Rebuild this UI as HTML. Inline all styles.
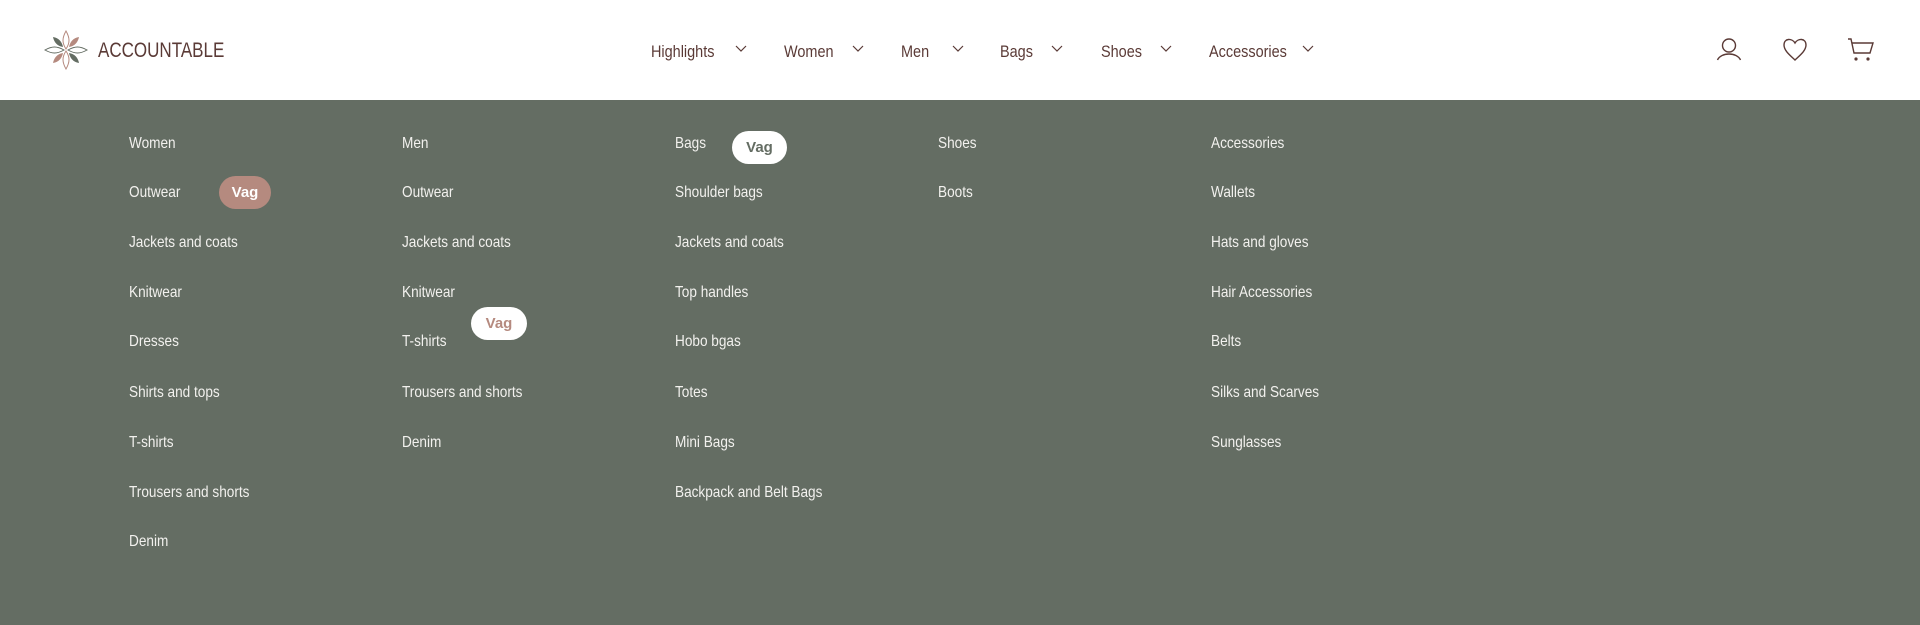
<!DOCTYPE html>
<html><head><meta charset="utf-8"><style>
*{margin:0;padding:0;box-sizing:border-box}
body{width:1920px;height:625px;overflow:hidden;background:#646d63;font-family:"Liberation Sans Narrow","Liberation Sans",sans-serif;position:relative}
.hdr{position:absolute;left:0;top:0;width:1920px;height:100px;background:#fff}
.a{position:absolute;white-space:nowrap}
.nav{color:#5a3a36;font-size:17px;top:42px;transform:scaleX(0.85);transform-origin:0 0}
.chev{position:absolute;top:45px}
.m{color:#f2f1ee;font-size:16px;transform:scaleX(0.85);transform-origin:0 0;margin-top:2px}
.pill{position:absolute;border-radius:17px;font-weight:bold;font-size:15px;text-align:center;line-height:33px}
</style></head><body>
<div class="hdr">
<svg class="a" style="left:43px;top:29px" width="46" height="42" viewBox="0 0 46 42">
<path d="M23 2 C19 9 19 14 23 20 C27 14 27 9 23 2Z" fill="none" stroke="#b58a7f" stroke-width="1"/>
<path d="M23 40 C19 33 19 28 23 22 C27 28 27 33 23 40Z" fill="none" stroke="#b58a7f" stroke-width="1"/>
<path d="M2 21 C9 17 14 17 21 21 C14 25 9 25 2 21Z" fill="none" stroke="#646d63" stroke-width="1"/>
<path d="M44 21 C37 17 32 17 25 21 C32 25 37 25 44 21Z" fill="none" stroke="#646d63" stroke-width="1"/>
<path d="M10 8 C16 9 19 13 20 18 C14 17 11 13 10 8Z" fill="#646d63"/>
<path d="M36 8 C30 9 27 13 26 18 C32 17 35 13 36 8Z" fill="#b58a7f"/>
<path d="M10 34 C16 33 19 29 20 24 C14 25 11 29 10 34Z" fill="#b58a7f"/>
<path d="M36 34 C30 33 27 29 26 24 C32 25 35 29 36 34Z" fill="#646d63"/>
</svg>
<div class="a" style="left:98px;top:39px;font-size:21px;color:#5a3a36;transform:scaleX(0.81);transform-origin:0 0">ACCOUNTABLE</div>

<div class="a nav" style="left:651px">Highlights</div>
<div class="a nav" style="left:784px">Women</div>
<div class="a nav" style="left:901px">Men</div>
<div class="a nav" style="left:1000px">Bags</div>
<div class="a nav" style="left:1101px">Shoes</div>
<div class="a nav" style="left:1209px">Accessories</div>
<svg class="chev" style="left:735px" width="12" height="8"><path d="M1 1 L6 6 L11 1" fill="none" stroke="#5a3a36" stroke-width="1.2"/></svg>
<svg class="chev" style="left:852px" width="12" height="8"><path d="M1 1 L6 6 L11 1" fill="none" stroke="#5a3a36" stroke-width="1.2"/></svg>
<svg class="chev" style="left:952px" width="12" height="8"><path d="M1 1 L6 6 L11 1" fill="none" stroke="#5a3a36" stroke-width="1.2"/></svg>
<svg class="chev" style="left:1051px" width="12" height="8"><path d="M1 1 L6 6 L11 1" fill="none" stroke="#5a3a36" stroke-width="1.2"/></svg>
<svg class="chev" style="left:1160px" width="12" height="8"><path d="M1 1 L6 6 L11 1" fill="none" stroke="#5a3a36" stroke-width="1.2"/></svg>
<svg class="chev" style="left:1302px" width="12" height="8"><path d="M1 1 L6 6 L11 1" fill="none" stroke="#5a3a36" stroke-width="1.2"/></svg>

<svg class="a" style="left:1716px;top:38px" width="26" height="24" viewBox="0 0 26 24"><circle cx="13" cy="7.5" r="6.5" fill="none" stroke="#5a3a36" stroke-width="1.4"/><path d="M1.5 22 C5 14 21 14 24.5 22" fill="none" stroke="#5a3a36" stroke-width="1.4"/></svg>
<svg class="a" style="left:1782px;top:38px" width="26" height="24" viewBox="0 0 26 24"><path d="M13 5 C10 0 2 0 2 7 C2 13 9 18 13 22 C17 18 24 13 24 7 C24 0 16 0 13 5Z" fill="none" stroke="#5a3a36" stroke-width="1.4"/></svg>
<svg class="a" style="left:1847px;top:38px" width="28" height="24" viewBox="0 0 28 24"><path d="M1 1 L4 1 L7 15 L23 15 L26 5 L5 5" fill="none" stroke="#5a3a36" stroke-width="1.4"/><circle cx="9" cy="21" r="1.6" fill="#5a3a36"/><circle cx="21" cy="21" r="1.6" fill="#5a3a36"/></svg>
</div>

<div class="a m" style="left:129px;top:133px">Women</div>
<div class="a m" style="left:129px;top:182px">Outwear</div>
<div class="a m" style="left:129px;top:232px">Jackets and coats</div>
<div class="a m" style="left:129px;top:282px">Knitwear</div>
<div class="a m" style="left:129px;top:331px">Dresses</div>
<div class="a m" style="left:129px;top:382px">Shirts and tops</div>
<div class="a m" style="left:129px;top:432px">T-shirts</div>
<div class="a m" style="left:129px;top:482px">Trousers and shorts</div>
<div class="a m" style="left:129px;top:531px">Denim</div>

<div class="a m" style="left:402px;top:133px">Men</div>
<div class="a m" style="left:402px;top:182px">Outwear</div>
<div class="a m" style="left:402px;top:232px">Jackets and coats</div>
<div class="a m" style="left:402px;top:282px">Knitwear</div>
<div class="a m" style="left:402px;top:331px">T-shirts</div>
<div class="a m" style="left:402px;top:382px">Trousers and shorts</div>
<div class="a m" style="left:402px;top:432px">Denim</div>

<div class="a m" style="left:675px;top:133px">Bags</div>
<div class="a m" style="left:675px;top:182px">Shoulder bags</div>
<div class="a m" style="left:675px;top:232px">Jackets and coats</div>
<div class="a m" style="left:675px;top:282px">Top handles</div>
<div class="a m" style="left:675px;top:331px">Hobo bgas</div>
<div class="a m" style="left:675px;top:382px">Totes</div>
<div class="a m" style="left:675px;top:432px">Mini Bags</div>
<div class="a m" style="left:675px;top:482px">Backpack and Belt Bags</div>

<div class="a m" style="left:938px;top:133px">Shoes</div>
<div class="a m" style="left:938px;top:182px">Boots</div>

<div class="a m" style="left:1211px;top:133px">Accessories</div>
<div class="a m" style="left:1211px;top:182px">Wallets</div>
<div class="a m" style="left:1211px;top:232px">Hats and gloves</div>
<div class="a m" style="left:1211px;top:282px">Hair Accessories</div>
<div class="a m" style="left:1211px;top:331px">Belts</div>
<div class="a m" style="left:1211px;top:382px">Silks and Scarves</div>
<div class="a m" style="left:1211px;top:432px">Sunglasses</div>

<div class="pill" style="left:219px;top:176px;width:52px;height:33px;background:#b58a7f;color:#fff">Vag</div>
<div class="pill" style="left:732px;top:131px;width:55px;height:33px;background:#fff;color:#646d63">Vag</div>
<div class="pill" style="left:471px;top:307px;width:56px;height:33px;background:#fff;color:#b58a7f">Vag</div>
</body></html>
